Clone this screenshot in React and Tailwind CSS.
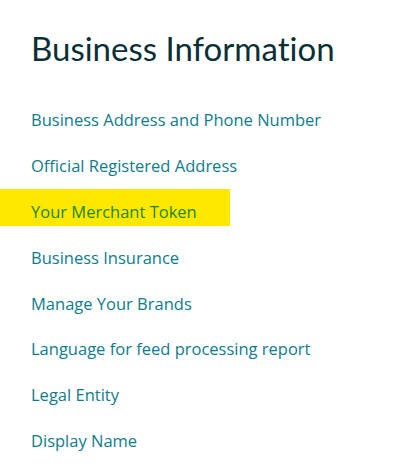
const links = [
  'Business Address and Phone Number',
  'Official Registered Address',
  'Your Merchant Token',
  'Business Insurance',
  'Manage Your Brands',
  'Language for feed processing report',
  'Legal Entity',
  'Display Name',
];

export default function App() {
  return (
    <div className="min-h-screen bg-white pt-[28px]">
      <h1 className="pl-[31px] font-['Lato',sans-serif] text-[33px] leading-[40px] text-[#0b2f36] [font-variant-ligatures:none]">
        Business Information
      </h1>

      <ul className="mt-[29px] flex flex-col gap-[8.9px] font-['Open_Sans',sans-serif]">
        {links.map((label) => (
          <li key={label} className="flex">
            <a
              href="#"
              className={
                label === 'Your Merchant Token'
                  ? 'block h-[37px] w-[230px] bg-[#ffe800] pt-[12px] pl-[31px] text-[16.5px] leading-[21px] text-[#22870f]'
                  : 'block h-[37px] pt-[12px] pl-[31px] text-[16.5px] leading-[21px] text-[#0f7c8c]'
              }
            >
              {label}
            </a>
          </li>
        ))}
      </ul>
    </div>
  );
}
